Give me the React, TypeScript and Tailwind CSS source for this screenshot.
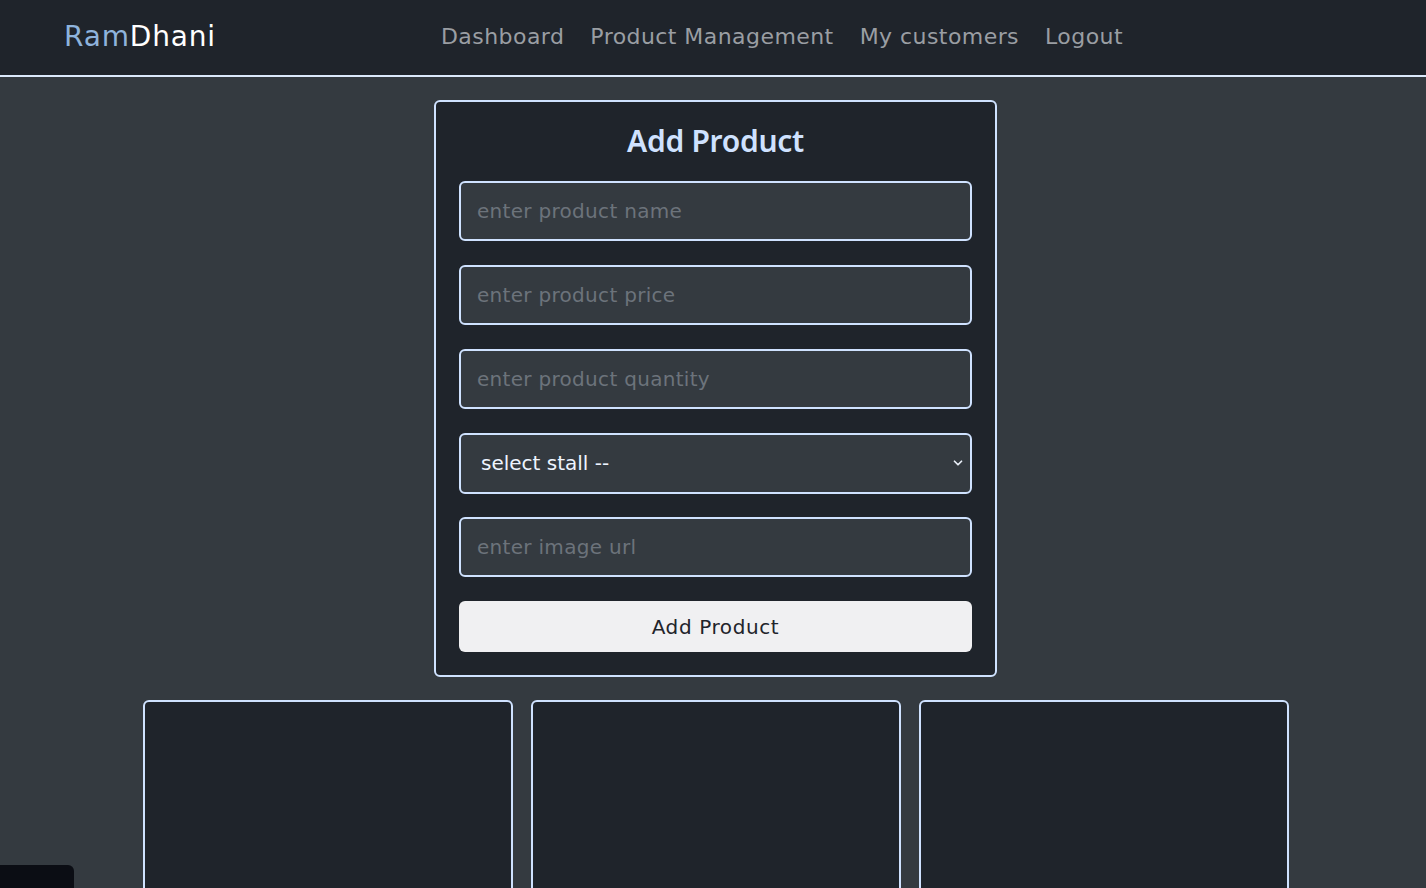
import { ChevronDown } from 'lucide-react'

const FONT = { fontFamily: '"DejaVu Sans", "Noto Sans", sans-serif' }

const links = ['Dashboard', 'Product Management', 'My customers', 'Logout']

const fields = [
  'enter product name',
  'enter product price',
  'enter product quantity',
]

function Field({ placeholder }: { placeholder: string }) {
  return (
    <input
      placeholder={placeholder}
      className="h-[60px] w-full rounded-md border-2 border-[#cfe2ff] bg-[#343a40] px-4 text-[20px] tracking-[0.015em] text-white outline-none placeholder:text-[#6c737b]"
    />
  )
}

export default function App() {
  return (
    <div className="min-h-[888px] overflow-hidden bg-[#343a40]" style={FONT}>
      <nav className="flex h-[77px] items-center border-b-2 border-[#dbe9fb] bg-[#1f242b] pb-[2px] pl-16 pr-16">
        <a className="text-[28px] tracking-[0.03em] text-white">
          <span className="text-[#8eb3dc]">Ram</span>Dhani
        </a>
        <ul className="mx-auto flex gap-[26px] pr-[14px]">
          {links.map((l) => (
            <li key={l} className="text-[22px] tracking-[0.02em] text-[#9a9ea3]">
              {l}
            </li>
          ))}
        </ul>
      </nav>

      <main className="flex flex-col items-center pl-[5px] pt-[23px]">
        <form className="flex w-[563px] flex-col gap-[23.9px] rounded-md border-2 border-[#cfe2ff] bg-[#1f242b] px-[23px] pb-[23px] pt-[21px]">
          <h2
            className="pt-[1px] text-center text-[30px] leading-[33px] font-semibold tracking-[-0.01em] text-[#cfe2ff]"
            style={{ fontFamily: '"Noto Sans", "Open Sans", sans-serif' }}
          >
            Add Product
          </h2>
          {fields.map((f) => (
            <Field key={f} placeholder={f} />
          ))}
          <div className="relative">
            <select className="h-[61px] w-full appearance-none rounded-md border-2 border-[#cfe2ff] bg-[#343a40] pl-5 text-[20px] text-[#eef4ff] outline-none">
              <option>select stall --</option>
            </select>
            <ChevronDown
              size={14}
              strokeWidth={3}
              className="pointer-events-none absolute right-[7px] top-1/2 -translate-y-1/2 text-[#e8eef7]"
            />
          </div>
          <Field placeholder="enter image url" />
          <button
            type="button"
            className="h-[51px] w-full rounded-md bg-[#f0f0f2] text-[20px] tracking-[0.03em] text-[#1f242b]"
          >
            Add Product
          </button>
        </form>

        <div className="mt-[23px] grid grid-cols-3 gap-[18px]">
          {[0, 1, 2].map((i) => (
            <div
              key={i}
              className="h-[260px] w-[370px] rounded-md border-2 border-[#cfe2ff] bg-[#1f242b]"
            />
          ))}
        </div>
      </main>

      <div className="fixed bottom-0 left-0 h-[23px] w-[74px] rounded-tr-md bg-[#0b0d14]" />
    </div>
  )
}
